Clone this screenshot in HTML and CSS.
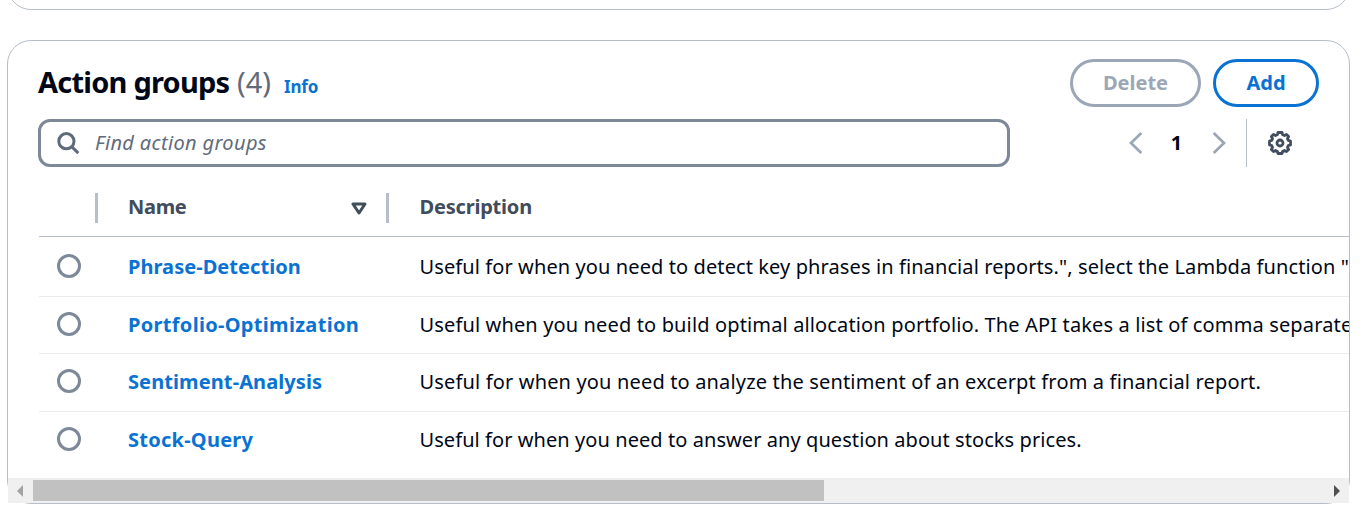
FILE: index.html
```html
<!DOCTYPE html>
<html lang="en">
<head>
<meta charset="utf-8">
<title>Action groups</title>
<link rel="stylesheet" href="styles.css">
</head>
<body>
<div class="previous-panel"></div>
<section class="panel">
  <header class="panel-header">
    <h2 class="title"><span class="title-text">Action groups</span><span class="count">(4)</span><a class="info">Info</a></h2>
    <div class="actions">
      <button class="btn btn-disabled" disabled><span>Delete</span></button>
      <button class="btn btn-add"><span>Add</span></button>
    </div>
  </header>
  <div class="tools">
    <div class="search">
      <svg class="search-icon" viewBox="0 0 24 24"><circle cx="10.4" cy="10.2" r="7.6"/><path d="M15.7 15.700l6.600 6.400"/></svg>
      <span class="placeholder">Find action groups</span>
    </div>
    <div class="pager">
      <svg class="chevron" viewBox="0 0 14 22"><path d="M12.3 1L2 11l10.300 10"/></svg>
      <span class="page">1</span>
      <svg class="chevron" viewBox="0 0 14 22"><path d="M1.7 1L12 11 1.7 21"/></svg>
    </div>
    <div class="settings">
      <svg class="gear" viewBox="0 0 24 24"><path d="M10 1.500h4l.7 2.300 1.700.7 2.100-1.100 2.100 2.100-1.100 2.100.7 1.700 2.300.7v4l-2.300.7-.7 1.700 1.100 2.100-2.100 2.100-2.100-1.100-1.700.7-.7 2.300h-4l-.7-2.300-1.700-.7-2.100 1.100-2.100-2.100 1.100-2.100-.7-1.700-2.300-.7v-4l2.300-.7.7-1.700-1.100-2.100 2.100-2.100 2.100 1.100 1.700-.7z"/><circle cx="12" cy="12" r="3"/></svg>
    </div>
  </div>
  <div class="table">
    <div class="row head">
      <div class="cell select"></div>
      <div class="cell name"><span>Name</span><svg class="sort" viewBox="0 0 16 13"><path d="M2 2h12L8 11z"/></svg></div>
      <div class="cell desc"><span>Description</span></div>
    </div>
    <div class="row first">
      <div class="cell select"><span class="radio"></span></div>
      <div class="cell name"><a class="link">Phrase-Detection</a></div>
      <div class="cell desc"><span class="text">Useful for when you need to detect key phrases in financial reports.", select the Lambda function "</span></div>
    </div>
    <div class="row second">
      <div class="cell select"><span class="radio"></span></div>
      <div class="cell name"><a class="link">Portfolio-Optimization</a></div>
      <div class="cell desc"><span class="text">Useful when you need to build optimal allocation portfolio. The API takes a list of comma separate</span></div>
    </div>
    <div class="row third">
      <div class="cell select"><span class="radio"></span></div>
      <div class="cell name"><a class="link">Sentiment-Analysis</a></div>
      <div class="cell desc"><span class="text">Useful for when you need to analyze the sentiment of an excerpt from a financial report.</span></div>
    </div>
    <div class="row last">
      <div class="cell select"><span class="radio"></span></div>
      <div class="cell name"><a class="link">Stock-Query</a></div>
      <div class="cell desc"><span class="text">Useful for when you need to answer any question about stocks prices.</span></div>
    </div>
  </div>
  <div class="scrollbar">
    <svg class="arrow" viewBox="0 0 25 25"><path fill="#a3a3a3" d="M15 7v12L9 13z"/></svg>
    <div class="track"><div class="thumb"></div></div>
    <svg class="arrow" viewBox="0 0 25 25"><path fill="#505050" d="M10 7v12l6-6z"/></svg>
  </div>
</section>
</body>
</html>
```
FILE: styles.css
```css
* { box-sizing: border-box; }
body {
  margin: 0;
  height: 514px;
  overflow: hidden;
  background: #fff;
  color: #000716;
  font-family: "Noto Sans", sans-serif;
  font-size: 20px;
  padding: 0 16px 0 7px;
}
.previous-panel {
  height: 50px;
  margin-top: -40px;
  border: 1px solid #b6bec9;
  border-radius: 24px;
}
.panel {
  margin-top: 30px;
  height: 464px;
  border: 1px solid #b6bec9;
  border-radius: 24px;
  display: flex;
  flex-direction: column;
}
.panel-header {
  display: flex;
  justify-content: space-between;
  padding: 18px 30px 0;
  height: 78px;
}
.title {
  margin: 0;
  height: 48px;
  display: flex;
  align-items: baseline;
  font-size: 29px;
  line-height: 46px;
  white-space: nowrap;
}
.title-text { width: 199px; letter-spacing: -0.77px; }
.count { width: 47px; color: #5f6b7a; font-weight: 400; }
.info { color: #0972d3; font-size: 17px; letter-spacing: -0.2px; }
.actions { display: flex; gap: 12px; }
.btn {
  height: 48px;
  padding: 0;
  border: 3px solid;
  border-radius: 30px;
  background: #fff;
  font: 700 20px/42px "Noto Sans", sans-serif;
}
.btn-disabled { width: 131px; color: #9ba7b6; }
.btn-add { width: 106px; color: #0972d3; }
.tools { display: flex; padding-left: 30px; height: 48px; }
.search {
  width: 972px;
  height: 48px;
  border: 3px solid #7d8998;
  border-radius: 12px;
  display: flex;
  align-items: center;
  padding-left: 15px;
  color: #5f6b7a;
  font-style: italic;
}
.search-icon {
  width: 24px;
  height: 24px;
  margin-right: 15px;
  fill: none;
  stroke: #5f6b7a;
  stroke-width: 3;
}
.placeholder { padding-bottom: 2px; letter-spacing: 0.35px; }
.pager { display: flex; align-items: center; margin-left: 118.5px; height: 48px; }
.chevron { width: 14px; height: 22px; fill: none; stroke: #9ba7b6; stroke-width: 2.7; }
.page { width: 69px; padding: 0 1px 2px 0; text-align: center; font-weight: 700; }
.settings {
  margin-left: 20.5px;
  border-left: 1px solid #b6bec9;
  padding-left: 21px;
  display: flex;
  align-items: center;
}
.gear { width: 24px; height: 24px; fill: none; stroke: #414d5c; stroke-width: 2.8; stroke-linejoin: round; }
.table { margin-left: 31px; height: 311px; overflow: hidden; }
.row {
  display: flex;
  height: 58px;
  border-bottom: 1px solid #e9ebed;
}
.row.head { height: 70px; border-bottom-color: #b6bec9; color: #414d5c; font-weight: 700; }
.row.first { height: 60px; }
.row.second { height: 57px; }
.row.last { border-bottom: 0; }
.cell { display: flex; align-items: center; flex: none; white-space: nowrap; }
.select { width: 59px; padding: 0 0 2px 18px; }
.third .select, .last .select { padding-bottom: 4px; }
.name { width: 291px; padding-left: 30px; }
.head .select, .head .name { border-right: 3px solid #b6bec9; height: 30px; margin-top: 26px; }
.head .name { padding-right: 19px; justify-content: space-between; letter-spacing: -0.3px; }
.head .name span, .head .desc { padding-bottom: 4px; }
.head .desc { height: 30px; margin-top: 26px; letter-spacing: -0.2px; }
.desc { padding-left: 30.5px; }
.sort { width: 16px; height: 13px; fill: none; stroke: #414d5c; stroke-width: 3; stroke-linejoin: round; }
.radio { width: 24px; height: 24px; border: 3px solid #7d8998; border-radius: 50%; }
.link { color: #0972d3; font-weight: 700; }
.first .link { letter-spacing: 0.05px; }
.first .text { letter-spacing: 0.1px; }
.second .link { letter-spacing: 0.31px; }
.second .text { letter-spacing: 0.14px; }
.third .link { letter-spacing: 0.1px; }
.third .text { letter-spacing: 0.16px; }
.last .link { letter-spacing: 0.25px; }
.last .text { letter-spacing: 0.07px; }
.second .link, .second .text, .third .link, .third .text { padding-bottom: 2px; }
.last .link, .last .text { padding-bottom: 4px; }
.scrollbar {
  display: flex;
  height: 25px;
  background: #f0f0f0;
}
.arrow { width: 25px; height: 25px; flex: none; }
.track { flex: 1; padding: 2px 0; }
.thumb { width: 791px; height: 21px; background: #c1c1c1; }
```
